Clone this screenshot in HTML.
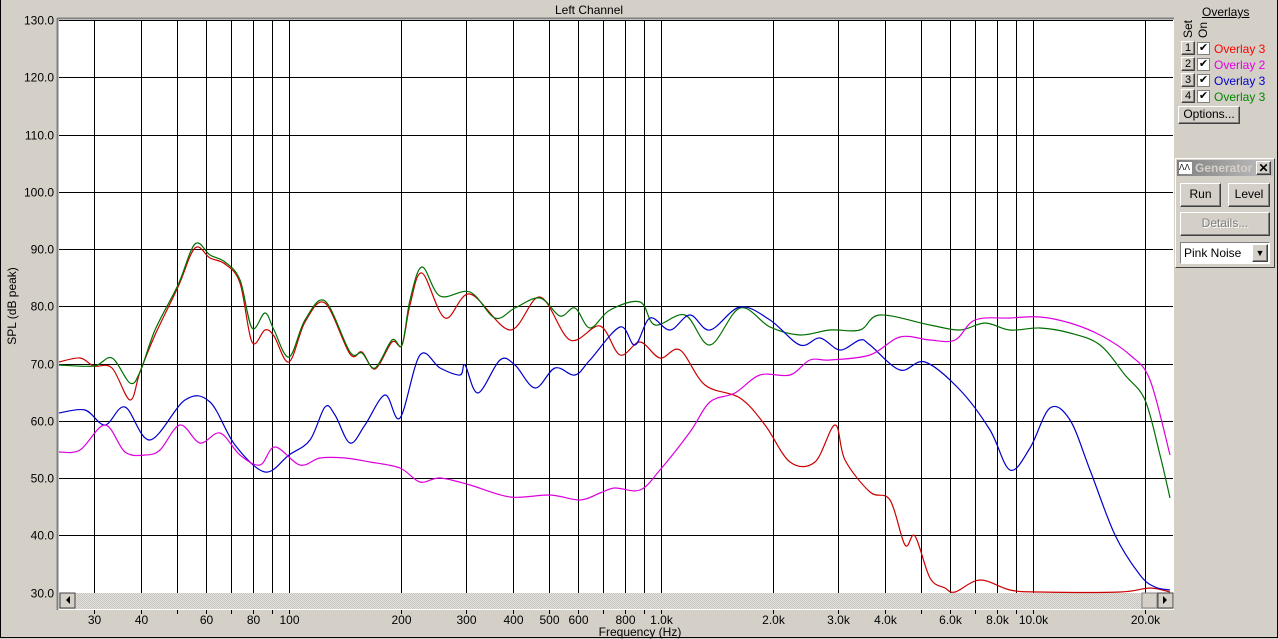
<!DOCTYPE html>
<html><head><meta charset="utf-8"><style>
body{margin:0;width:1278px;height:639px;background:#d4d0c8;font-family:"Liberation Sans",sans-serif;overflow:hidden;position:relative}
.t{position:absolute;font-size:12px;color:#000}
.btn{position:absolute;background:#d4d0c8;border:1px solid;border-color:#fff #404040 #404040 #fff;box-shadow:inset -1px -1px #808080;font-size:12px;text-align:center;box-sizing:border-box}
</style></head><body>
<div style="position:absolute;left:0;top:0;width:1276px;height:637px;border:1px solid #000;border-top:none;"></div>
<div class="t" style="left:555px;top:3px;">Left Channel</div>
<svg width="1278" height="639" style="position:absolute;left:0;top:0" font-family="Liberation Sans" font-size="12">
<defs><pattern id="ht" width="2" height="2" patternUnits="userSpaceOnUse"><rect width="1" height="1" fill="#c8c5be"/><rect x="1" y="1" width="1" height="1" fill="#c8c5be"/></pattern></defs>
<rect x="57" y="18" width="1117" height="592" fill="#fff"/>
<line x1="57.5" y1="18" x2="57.5" y2="610" stroke="#808080" stroke-width="2"/>
<line x1="57" y1="18.5" x2="1174" y2="18.5" stroke="#808080" stroke-width="2"/>
<g stroke="#000" stroke-width="1" id="g"></g>
<g id="lab"></g>
<rect x="59" y="593" width="1114" height="16" fill="#e4e2de"/>
<rect x="59" y="593" width="1114" height="16" fill="url(#ht)"/>
<rect x="60" y="593" width="15" height="15" fill="#d4d0c8" stroke="#404040"/><path d="M70 596v8l-4-4z" fill="#000"/>
<rect x="1142" y="593" width="15" height="15" fill="#d4d0c8" stroke="#808080"/>
<rect x="1158" y="593" width="15" height="15" fill="#d4d0c8" stroke="#404040"/><path d="M1163 596v8l4-4z" fill="#000"/>
<g fill="none" stroke-width="1.2" id="curves">
<polyline stroke="#cc0000" points="59,362 80,358 94,366 112,368 130,400 140,372 155,335 178,287 195,248 210,258 225,264 240,283 252,342 265,330 274,336 289,362 305,322 325,303 350,354 362,352 375,369 392,342 402,345 410,305 422,273 445,318 470,294 510,330 540,297 570,340 600,326 620,355 640,342 660,358 680,350 705,385 740,398 765,425 790,462 815,462 835,425 845,460 870,492 890,500 905,545 915,536 930,578 945,588 955,592 980,580 1010,590 1040,592 1120,592 1150,588 1170,592"/>
<polyline stroke="#007000" points="59,365 94,366 112,358 130,383 140,372 155,330 178,285 195,244 210,255 225,262 240,280 252,328 265,313 274,330 289,357 305,320 325,301 350,352 362,353 375,368 392,340 402,345 410,300 422,267 440,296 470,292 495,318 515,308 540,298 560,316 575,308 590,328 610,310 640,302 655,325 685,315 710,345 740,308 770,327 800,335 830,330 860,330 880,315 930,325 960,330 985,323 1010,330 1040,328 1070,333 1100,345 1125,375 1145,400 1160,455 1170,498"/>
<polyline stroke="#0000cc" points="59,413 85,410 105,425 125,407 150,440 185,400 210,402 235,445 265,472 289,455 310,440 325,407 335,415 350,443 365,425 385,395 400,418 420,355 440,368 460,375 465,365 478,393 500,360 515,365 535,388 555,368 575,375 590,360 620,327 635,345 650,318 670,330 690,315 710,330 740,307 770,320 800,345 820,338 840,350 860,340 870,345 900,370 925,362 960,390 990,430 1010,470 1030,448 1050,408 1070,420 1090,470 1115,535 1140,575 1155,587 1170,590"/>
<polyline stroke="#dd00dd" points="59,452 80,450 105,425 125,452 145,455 160,450 180,425 200,443 220,433 240,455 260,465 275,447 300,465 320,458 345,458 370,462 400,468 420,482 440,478 470,485 510,497 550,495 580,500 600,493 615,488 640,490 660,470 690,432 710,402 735,393 760,375 790,375 810,360 830,360 870,355 900,337 930,340 955,340 975,320 1010,318 1040,317 1070,323 1100,335 1130,355 1150,380 1170,455"/>
</g>
<text transform="translate(16,306) rotate(-90)" text-anchor="middle">SPL (dB peak)</text>
<text x="640" y="636" text-anchor="middle">Frequency (Hz)</text>
</svg>
<script>
var g=document.getElementById('g'),lab=document.getElementById('lab'),ns='http://www.w3.org/2000/svg';
function el(t,a,p,txt){var e=document.createElementNS(ns,t);for(var k in a)e.setAttribute(k,a[k]);if(txt)e.textContent=txt;p.appendChild(e);return e;}
for(var i=0;i<=10;i++){var y=Math.round(20+i*57.25)+0.5;el('line',{x1:59,x2:1173,y1:y,y2:y},g);el('text',{x:54,y:y+4,'text-anchor':'end'},lab,(130-i*10)+'.0');}
function X(f){return 289+372*Math.log10(f/100);}
var fs=[30,40,50,60,70,80,90,100,200,300,400,500,600,700,800,900,1000,2000,3000,4000,5000,6000,7000,8000,9000,10000,20000];
var lbl={30:'30',40:'40',60:'60',80:'80',100:'100',200:'200',300:'300',400:'400',500:'500',600:'600',800:'800',1000:'1.0k',2000:'2.0k',3000:'3.0k',4000:'4.0k',6000:'6.0k',8000:'8.0k',10000:'10.0k',20000:'20.0k'};
fs.forEach(function(f){var x=Math.round(X(f))+0.5;el('line',{x1:x,x2:x,y1:20,y2:593},g);el('line',{x1:x,x2:x,y1:610,y2:614},g);if(lbl[f])el('text',{x:x,y:624,'text-anchor':'middle'},lab,lbl[f]);});
var cv=document.getElementById('curves');
Array.prototype.slice.call(cv.querySelectorAll('polyline')).forEach(function(pl){
var p=pl.getAttribute('points').trim().split(/\s+/).map(function(s){return s.split(',').map(Number);});
var d='M'+p[0][0]+' '+p[0][1];
for(var i=0;i<p.length-1;i++){var a=p[i>0?i-1:0],b=p[i],c=p[i+1],e=p[i+2<p.length?i+2:i+1];
d+=' C'+(b[0]+(c[0]-a[0])/6)+' '+(b[1]+(c[1]-a[1])/6)+' '+(c[0]-(e[0]-b[0])/6)+' '+(c[1]-(e[1]-b[1])/6)+' '+c[0]+' '+c[1];}
el('path',{d:d,stroke:pl.getAttribute('stroke')},cv);cv.removeChild(pl);});
</script>
<div style="position:absolute;left:1202px;top:5px;font-size:12px;text-decoration:underline">Overlays</div>
<div style="position:absolute;left:1181px;top:38px;font-size:12px;transform:rotate(-90deg);transform-origin:0 0;">Set</div>
<div style="position:absolute;left:1196px;top:38px;font-size:12px;transform:rotate(-90deg);transform-origin:0 0;">On</div>
<div class="btn" style="left:1181px;top:41px;width:14px;height:14px;font-size:11px;line-height:12px">1</div>
<div class="btn" style="left:1181px;top:57px;width:14px;height:14px;font-size:11px;line-height:12px">2</div>
<div class="btn" style="left:1181px;top:73px;width:14px;height:14px;font-size:11px;line-height:12px">3</div>
<div class="btn" style="left:1181px;top:89px;width:14px;height:14px;font-size:11px;line-height:12px">4</div>
<div style="position:absolute;left:1197px;top:42px;width:13px;height:13px;background:#fff;border:1px solid #808080;box-sizing:border-box;font-size:11px;line-height:11px;text-align:center">✔</div>
<div style="position:absolute;left:1197px;top:58px;width:13px;height:13px;background:#fff;border:1px solid #808080;box-sizing:border-box;font-size:11px;line-height:11px;text-align:center">✔</div>
<div style="position:absolute;left:1197px;top:74px;width:13px;height:13px;background:#fff;border:1px solid #808080;box-sizing:border-box;font-size:11px;line-height:11px;text-align:center">✔</div>
<div style="position:absolute;left:1197px;top:90px;width:13px;height:13px;background:#fff;border:1px solid #808080;box-sizing:border-box;font-size:11px;line-height:11px;text-align:center">✔</div>
<div class="t" style="left:1214px;top:42px;color:#f00">Overlay 3</div>
<div class="t" style="left:1214px;top:58px;color:#e000e0">Overlay 2</div>
<div class="t" style="left:1214px;top:74px;color:#00c">Overlay 3</div>
<div class="t" style="left:1214px;top:90px;color:#080">Overlay 3</div>
<div class="btn" style="left:1178px;top:106px;width:62px;height:18px;line-height:15px">Options...</div>
<div style="position:absolute;left:1175px;top:158px;width:100px;height:110px;border:1px solid;border-color:#fff #404040 #404040 #fff;box-sizing:border-box"></div>
<div style="position:absolute;left:1177px;top:160px;width:96px;height:16px;background:linear-gradient(90deg,#808080,#c0c0c0);"></div>
<div style="position:absolute;left:1179px;top:162px;width:13px;height:12px;background:#fff;font-size:8px;line-height:12px">ᐱᐱ</div>
<div style="position:absolute;left:1195px;top:160px;color:#d4d0c8;font-size:12px;font-weight:bold;line-height:16px">Generator</div>
<div class="btn" style="left:1256px;top:161px;width:15px;height:14px;font-size:12px;line-height:12px;font-weight:bold">✕</div>
<div class="btn" style="left:1180px;top:183px;width:41px;height:24px;line-height:21px">Run</div>
<div class="btn" style="left:1228px;top:183px;width:42px;height:24px;line-height:21px">Level</div>
<div class="btn" style="left:1180px;top:212px;width:90px;height:24px;line-height:21px;color:#808080;text-shadow:1px 1px #fff">Details...</div>
<div style="position:absolute;left:1180px;top:242px;width:90px;height:22px;background:#fff;border:1px solid;border-color:#808080 #fff #fff #808080;box-sizing:border-box;font-size:12px;line-height:20px;padding-left:3px">Pink Noise</div>
<div class="btn" style="left:1252px;top:244px;width:16px;height:18px;font-size:9px;line-height:16px">▼</div>
</body></html>
